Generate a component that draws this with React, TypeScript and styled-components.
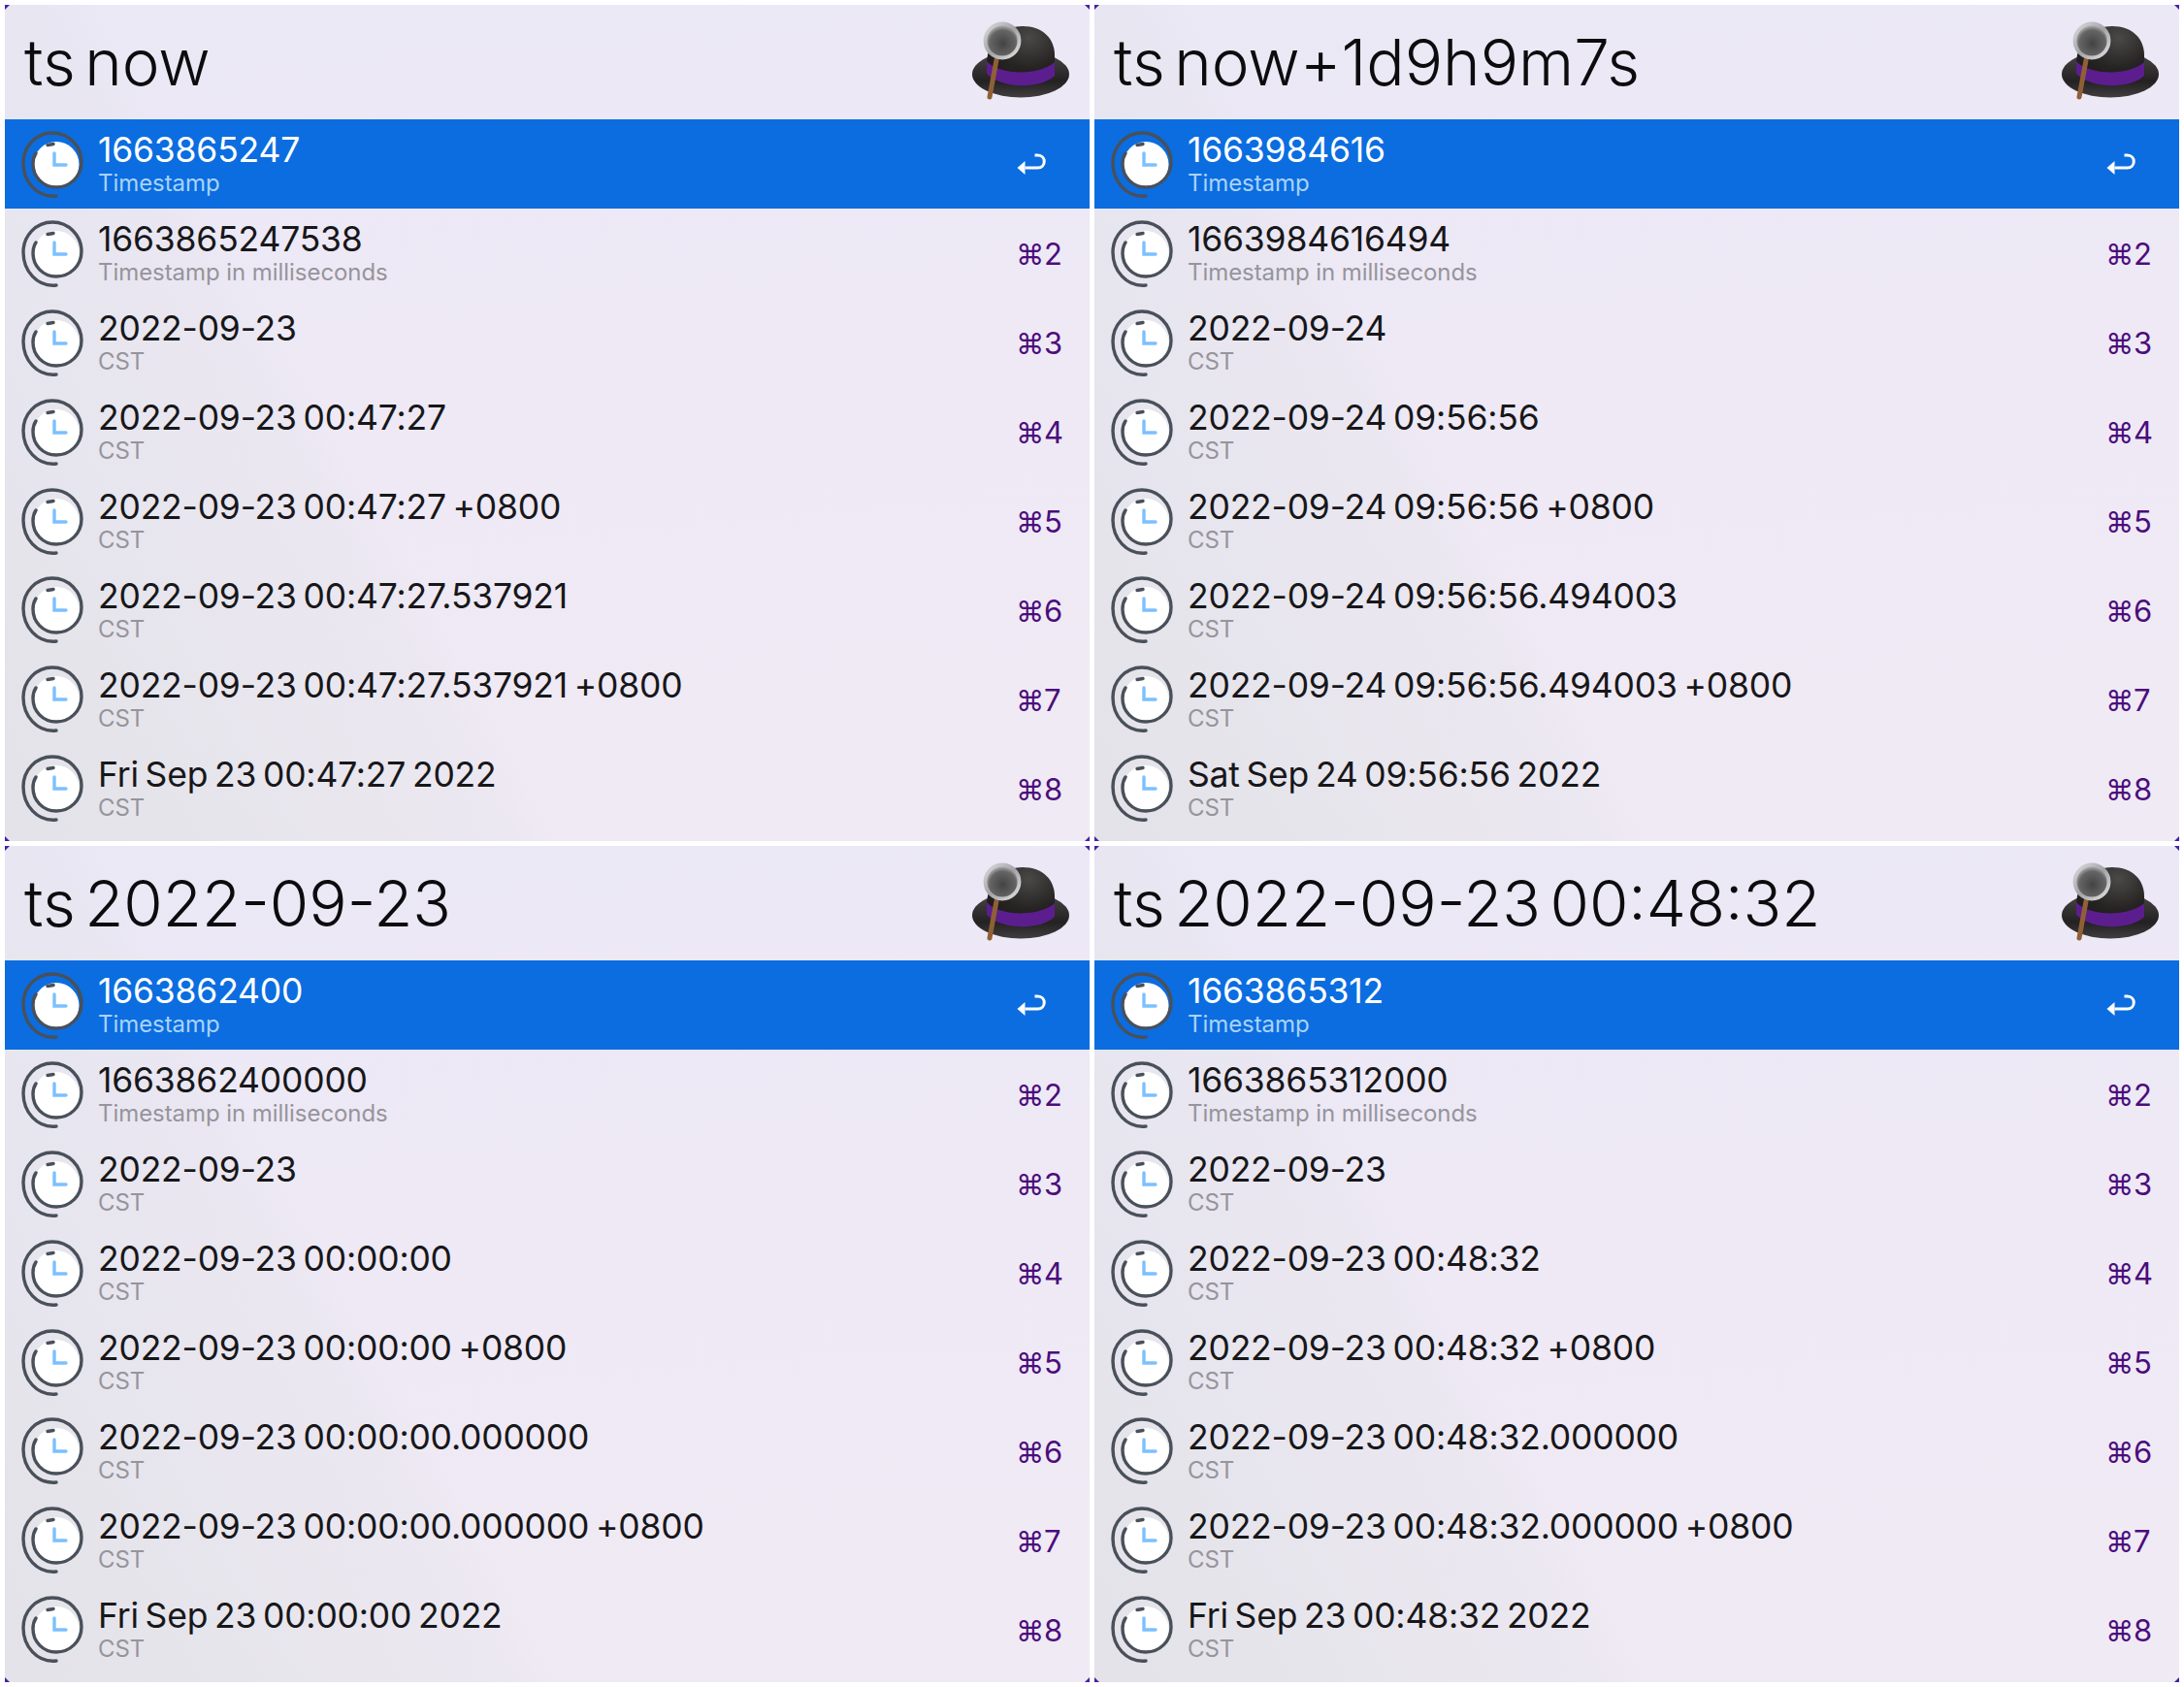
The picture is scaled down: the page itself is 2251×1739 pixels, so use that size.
import styled, { createGlobalStyle } from 'styled-components';

type Result = { title: string; sub: string };

type Query = { query: string; results: Result[] };

const buildResults = (
  stamp: string,
  millis: string,
  date: string,
  time: string,
  micro: string,
  ctime: string,
): Result[] => [
  { title: stamp, sub: 'Timestamp' },
  { title: millis, sub: 'Timestamp in milliseconds' },
  { title: date, sub: 'CST' },
  { title: `${date} ${time}`, sub: 'CST' },
  { title: `${date} ${time} +0800`, sub: 'CST' },
  { title: `${date} ${time}.${micro}`, sub: 'CST' },
  { title: `${date} ${time}.${micro} +0800`, sub: 'CST' },
  { title: ctime, sub: 'CST' },
];

const queries: Query[] = [
  {
    query: 'ts now',
    results: buildResults('1663865247', '1663865247538', '2022-09-23', '00:47:27', '537921', 'Fri Sep 23 00:47:27 2022'),
  },
  {
    query: 'ts now+1d9h9m7s',
    results: buildResults('1663984616', '1663984616494', '2022-09-24', '09:56:56', '494003', 'Sat Sep 24 09:56:56 2022'),
  },
  {
    query: 'ts 2022-09-23',
    results: buildResults('1663862400', '1663862400000', '2022-09-23', '00:00:00', '000000', 'Fri Sep 23 00:00:00 2022'),
  },
  {
    query: 'ts 2022-09-23 00:48:32',
    results: buildResults('1663865312', '1663865312000', '2022-09-23', '00:48:32', '000000', 'Fri Sep 23 00:48:32 2022'),
  },
];

const GlobalStyle = createGlobalStyle`
  html, body {
    margin: 0;
    padding: 0;
    background: #ffffff;
  }
`;

const Grid = styled.div`
  display: grid;
  grid-template-columns: repeat(2, 1118px);
  grid-auto-rows: 862px;
  gap: 5px;
  padding: 5px;
  font-family: Inter, 'Liberation Sans', sans-serif;
`;

const Panel = styled.section`
  position: relative;
  display: flex;
  flex-direction: column;
  padding-bottom: 8px;
  box-sizing: border-box;
  background:
    linear-gradient(240.6deg, rgba(222, 224, 228, 0) 64%, rgba(222, 224, 228, 0.22) 67%, rgba(222, 224, 228, 0.75) 100%),
    linear-gradient(175deg, #ebe8f6 0%, #eee9f5 45%, #f0eaf4 100%);
`;

// the small dark notch in each window corner
const Corner = styled.i<{ $bottom?: boolean; $right?: boolean }>`
  position: absolute;
  ${(p) => (p.$bottom ? 'bottom: 0;' : 'top: 0;')}
  ${(p) => (p.$right ? 'right: 0;' : 'left: 0;')}
  width: 5px;
  height: 5px;
  background: #4a1fa8;
  clip-path: ${(p) => {
    if (p.$bottom && p.$right) return 'polygon(100% 0, 100% 100%, 0 100%)';
    if (p.$bottom) return 'polygon(0 0, 100% 100%, 0 100%)';
    if (p.$right) return 'polygon(0 0, 100% 0, 100% 100%)';
    return 'polygon(0 0, 100% 0, 0 100%)';
  }};
`;

const Header = styled.header`
  display: flex;
  align-items: center;
  justify-content: space-between;
  height: 118px;
  padding: 0 20px;
  box-sizing: border-box;
`;

const QueryText = styled.h1`
  margin: 0;
  font-size: 65.5px;
  font-weight: 300;
  word-spacing: -9px;
  color: #0c0c0e;
`;

const HatWrap = styled.svg`
  flex: none;
  width: 120px;
  height: 90px;
  margin: 2px -17px 0 0;
`;

const Row = styled.div<{ $selected?: boolean }>`
  display: flex;
  align-items: center;
  height: 91.9px;
  padding: 0 30px 0 15px;
  box-sizing: border-box;
  background: ${(p) => (p.$selected ? '#0b6de0' : 'transparent')};
`;

const ClockSvg = styled.svg`
  flex: none;
  width: 68px;
  height: 72px;
`;

const Texts = styled.div`
  flex: 1;
  min-width: 0;
  margin-left: 13px;
`;

const Title = styled.div<{ $selected?: boolean }>`
  font-size: 35.5px;
  line-height: 44px;
  letter-spacing: -0.2px;
  word-spacing: -3px;
  color: ${(p) => (p.$selected ? '#ffffff' : '#17171a')};
`;

const Sub = styled.div<{ $selected?: boolean }>`
  margin-top: -3px;
  font-size: 24px;
  line-height: 30px;
  letter-spacing: -0.06px;
  color: ${(p) => (p.$selected ? '#a9d2fa' : '#96949c')};
`;

const Shortcut = styled.div`
  width: 46px;
  margin-top: 2px;
  font-family: 'DejaVu Sans', Inter, sans-serif;
  font-size: 29px;
  color: #4b0d7c;
  white-space: nowrap;
`;

const ShortcutDigit = styled.span`
  font-family: Inter, sans-serif;
  font-size: 31px;
`;

const ReturnSvg = styled.svg`
  flex: none;
  width: 46px;
  height: 24px;
`;

const Hat = ({ id }: { id: number }) => (
  <HatWrap viewBox="0 0 120 90">
    <defs>
      <linearGradient id={`brim${id}`} x1="0" y1="0" x2="0" y2="1">
        <stop offset="0" stopColor="#4a4747" />
        <stop offset="0.65" stopColor="#232121" />
        <stop offset="1" stopColor="#403e3e" />
      </linearGradient>
      <radialGradient id={`crown${id}`} cx="0.62" cy="0.2" r="0.85">
        <stop offset="0" stopColor="#4b4848" />
        <stop offset="0.6" stopColor="#262323" />
        <stop offset="1" stopColor="#1b1919" />
      </radialGradient>
      <radialGradient id={`lens${id}`} cx="0.52" cy="0.58" r="0.6">
        <stop offset="0" stopColor="#444343" />
        <stop offset="0.65" stopColor="#666566" />
        <stop offset="1" stopColor="#d4d3d6" />
      </radialGradient>
      <linearGradient id={`ring${id}`} x1="0" y1="0" x2="1" y2="1">
        <stop offset="0" stopColor="#dcdbde" />
        <stop offset="0.5" stopColor="#a3a2a5" />
        <stop offset="1" stopColor="#e2e1e4" />
      </linearGradient>
    </defs>
    <ellipse cx="52" cy="56.5" rx="50" ry="24" fill={`url(#brim${id})`} />
    <path d="M17 45 C 18 22 32 7 54 7 C 75 7 87 20 87 37 L 87 58 C 70 71 34 71 17 56 Z" fill={`url(#crown${id})`} />
    <path d="M17 43 C 30 58 72 58 87 44 L 87 58 C 72 72 33 72 17 56 Z" fill="#5c1e8e" />
    <path d="M27 42 L 20 80" stroke="#8f6035" strokeWidth="5" strokeLinecap="round" />
    <circle cx="33" cy="22" r="17.5" fill={`url(#lens${id})`} stroke={`url(#ring${id})`} strokeWidth="3.8" />
  </HatWrap>
);

const Clock = () => (
  <ClockSvg viewBox="10 8 68 72">
    <circle cx="48" cy="44.5" r="23.5" fill="#ffffff" />
    <path
      d="M48 77 C 28 79 14 62 14 43 C 14 26 27 12 44 12 C 61 12 74 26 74 42 C 74 57 62 68 48 68 C 34 68 24 57 24 44 C 24 40 25 36 27 33"
      fill="none"
      stroke="#49505a"
      strokeWidth="3.4"
      strokeLinecap="round"
    />
    <path d="M39 24.5 L 45 23.5" stroke="#49505a" strokeWidth="3.4" strokeLinecap="round" />
    <path d="M46 33 V 45 H 58" fill="none" stroke="#7cc0ff" strokeWidth="3.4" strokeLinecap="round" />
  </ClockSvg>
);

const ReturnIcon = () => (
  <ReturnSvg viewBox="-1.5 0 46 24">
    <path d="M8 16 H 21 C 30 16 30 3 21 3 H 18" fill="none" stroke="#ffffff" strokeWidth="3" />
    <path d="M0 16 L 8 9 V 23 Z" fill="#ffffff" />
  </ReturnSvg>
);

const App = () => (
  <>
    <GlobalStyle />
    <Grid>
      {queries.map((q, qi) => (
        <Panel key={q.query}>
          <Corner />
          <Corner $right />
          <Corner $bottom />
          <Corner $bottom $right />
          <Header>
            <QueryText>{q.query}</QueryText>
            <Hat id={qi} />
          </Header>
          {q.results.map((r, i) => (
            <Row key={r.title + r.sub} $selected={i === 0}>
              <Clock />
              <Texts>
                <Title $selected={i === 0}>{r.title}</Title>
                <Sub $selected={i === 0}>{r.sub}</Sub>
              </Texts>
              {i === 0 ? (
                <ReturnIcon />
              ) : (
                <Shortcut>
                  ⌘<ShortcutDigit>{i + 1}</ShortcutDigit>
                </Shortcut>
              )}
            </Row>
          ))}
        </Panel>
      ))}
    </Grid>
  </>
);

export default App;
